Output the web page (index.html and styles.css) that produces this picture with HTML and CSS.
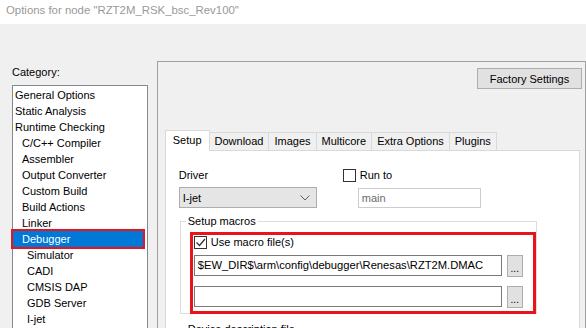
FILE: index.html
```html
<!DOCTYPE html>
<html lang="en">
<head>
  <meta charset="UTF-8" />
  <title>Options for node</title>
  <link rel="stylesheet" href="styles.css">
</head>
<body>
  <div class="titlebar">Options for node "RZT2M_RSK_bsc_Rev100"</div>

  <div class="dialog">
    <div class="category">
      <div class="cat-label">Category:</div>
      <ul class="cat-list">
        <li>General Options</li>
        <li>Static Analysis</li>
        <li>Runtime Checking</li>
        <li class="sub">C/C++ Compiler</li>
        <li class="sub">Assembler</li>
        <li class="sub">Output Converter</li>
        <li class="sub">Custom Build</li>
        <li class="sub">Build Actions</li>
        <li class="sub">Linker</li>
        <li class="sub selected">Debugger</li>
        <li class="subsub">Simulator</li>
        <li class="subsub">CADI</li>
        <li class="subsub">CMSIS DAP</li>
        <li class="subsub">GDB Server</li>
        <li class="subsub">I-jet</li>
      </ul>
    </div>

    <div class="panel">
      <div class="panel-top">
        <button class="btn factory">Factory Settings</button>
      </div>

      <div class="tabs">
        <div class="tab active">Setup</div>
        <div class="tab">Download</div>
        <div class="tab">Images</div>
        <div class="tab">Multicore</div>
        <div class="tab">Extra Options</div>
        <div class="tab">Plugins</div>
      </div>

      <div class="tab-page">
        <div class="driver-row">
          <div class="driver-col">
            <div class="label">Driver</div>
            <div class="combo">
              <span>I-jet</span>
              <svg width="10" height="6" viewBox="0 0 10 6"><polyline points="0.5,0.5 5,5 9.5,0.5" fill="none" stroke="#606060" stroke-width="1"/></svg>
            </div>
          </div>
          <div class="runto-col">
            <div class="check-row">
              <span class="checkbox"></span>
              <span>Run to</span>
            </div>
            <div class="field disabled">main</div>
          </div>
        </div>

        <fieldset class="group">
          <legend>Setup macros</legend>
          <div class="marked">
            <div class="check-row">
              <span class="checkbox checked">
                <svg width="11" height="11" viewBox="0 0 11 11"><polyline points="1.5,5.5 4.5,8.5 10,2" fill="none" stroke="#333" stroke-width="1.3"/></svg>
              </span>
              <span>Use macro file(s)</span>
            </div>
            <div class="file-row">
              <div class="field path">$EW_DIR$\arm\config\debugger\Renesas\RZT2M.DMAC</div>
              <button class="btn browse">...</button>
            </div>
            <div class="file-row">
              <div class="field path"></div>
              <button class="btn browse">...</button>
            </div>
          </div>
        </fieldset>

        <fieldset class="group second">
          <legend>Device description file</legend>
          <div class="spacer"></div>
        </fieldset>
      </div>
    </div>
  </div>
</body>
</html>
```

FILE: styles.css
```css
html, body {
  height: 100%;
}
body {
  margin: 0;
  background: #f0f0f0;
  color: #000;
  font-family: "Liberation Sans", Arial, sans-serif;
  font-size: 11px;
  overflow: hidden;
}
.titlebar {
  height: 24px;
  line-height: 20px;
  padding-left: 6px;
  background: #fff;
  color: #999;
  font-size: 11.4px;
  white-space: nowrap;
}
.dialog {
  display: flex;
  align-items: flex-start;
  gap: 9px;
  padding: 37px 0 0 12px;
}
.category {
  width: 137px;
  margin-top: 5px;
}
.cat-label {
  line-height: 13px;
  margin-bottom: 6px;
}
.cat-list {
  list-style: none;
  margin: 0;
  padding: 1px 0 0 0;
  height: 300px;
  background: #fff;
  border: 1px solid #828790;
}
.cat-list li {
  line-height: 16px;
  height: 16px;
  padding-left: 2px;
  white-space: nowrap;
}
.cat-list li.sub {
  padding-left: 9px;
}
.cat-list li.subsub {
  padding-left: 14px;
}
.cat-list li.selected {
  background: #0078d7;
  color: #fff;
  margin-right: 4px;
  outline: 2px solid #e8141c;
}
.panel {
  width: 421px;
  height: 300px;
  border: 1px solid #a0a0a0;
  padding: 6px 3px 0 7px;
}
.panel-top {
  display: flex;
  justify-content: flex-end;
}
.btn {
  font-family: "Liberation Sans", Arial, sans-serif;
  font-size: 11px;
  color: #000;
  background: #e1e1e1;
  border: 1px solid #adadad;
  padding: 0;
  margin: 0;
}
.factory {
  width: 105px;
  height: 21px;
}
.tabs {
  display: flex;
  align-items: flex-end;
  margin-top: 41px;
}
.tab {
  height: 17px;
  line-height: 17px;
  padding: 0 5px;
  border: 1px solid #d9d9d9;
  border-bottom: none;
  border-left: none;
  background: #f0f0f0;
  white-space: nowrap;
}
.tab.active {
  position: relative;
  height: 20px;
  line-height: 19px;
  padding: 0 7px;
  margin-bottom: -1px;
  background: #fff;
  border-left: 1px solid #d9d9d9;
  z-index: 1;
}
.tab-page {
  height: 200px;
  margin-right: 2px;
  background: #fff;
  border: 1px solid #d9d9d9;
  padding: 17px 0 0 13px;
}
.driver-row {
  display: flex;
  gap: 26px;
}
.label {
  line-height: 13px;
  margin-top: 1px;
  margin-bottom: 5px;
}
.combo {
  box-sizing: border-box;
  width: 138px;
  height: 21px;
  border: 1px solid #adadad;
  background: #e5e5e5;
  display: flex;
  align-items: center;
  justify-content: space-between;
  padding: 0 6px 0 3px;
}
.check-row {
  display: flex;
  align-items: center;
  gap: 4px;
  height: 13px;
  line-height: 13px;
}
.checkbox {
  width: 13px;
  height: 13px;
  box-sizing: border-box;
  border: 1px solid #333;
  background: #fff;
  display: flex;
  align-items: center;
  justify-content: center;
}
.runto-col .check-row {
  margin-top: 1px;
}
.field {
  box-sizing: border-box;
  height: 21px;
  line-height: 19px;
  border: 1px solid #7a7a7a;
  background: #fff;
  padding: 0 3px;
  white-space: nowrap;
  overflow: hidden;
}
.field.disabled {
  width: 123px;
  height: 20px;
  margin: 6px 0 0 15px;
  border-color: #ccc;
  color: #6d6d6d;
}
.field.path {
  width: 308px;
  font-size: 11.2px;
}
.group {
  margin: 7px 0 0 1px;
  width: 357px;
  box-sizing: border-box;
  border: 1px solid #dcdcdc;
  padding: 0;
}
.group legend {
  margin-left: 5px;
  padding: 0 2px;
  line-height: 13px;
}
.marked {
  margin: 4px 0 -1px 9px;
  border: 3px solid #e8141c;
  padding: 1px 0 3px 1px;
}
.file-row {
  display: flex;
  gap: 5px;
  margin-top: 6px;
}
.file-row + .file-row {
  margin-top: 9px;
}
.browse {
  width: 16px;
  height: 22px;
  line-height: 26px;
  font-size: 10px;
}
.group.second {
  margin-top: 9px;
}
.spacer {
  height: 40px;
}
```
